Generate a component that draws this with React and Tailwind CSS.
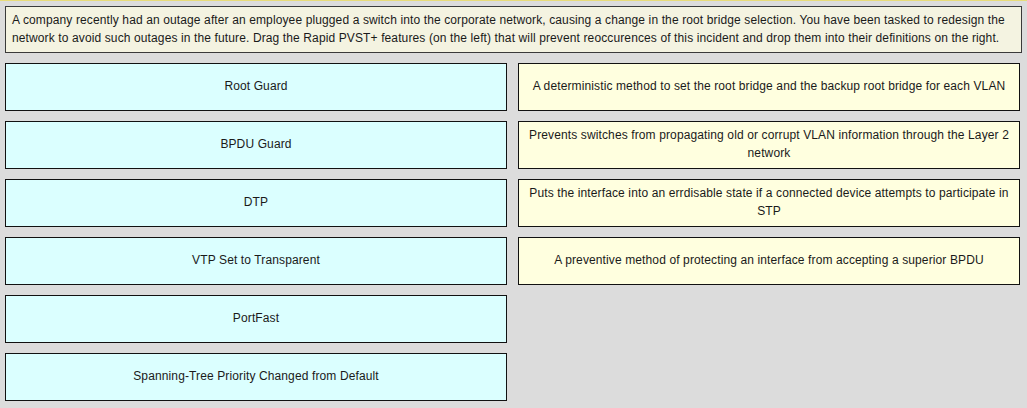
import React from "react";

const features = [
  "Root Guard",
  "BPDU Guard",
  "DTP",
  "VTP Set to Transparent",
  "PortFast",
  "Spanning-Tree Priority Changed from Default",
];

const definitions = [
  "A deterministic method to set the root bridge and the backup root bridge for each VLAN",
  "Prevents switches from propagating old or corrupt VLAN information through the Layer 2 network",
  "Puts the interface into an errdisable state if a connected device attempts to participate in STP",
  "A preventive method of protecting an interface from accepting a superior BPDU",
];

const DragDrop = () => {
  return (
    <div className="w-[1027px] h-[408px] bg-[#dcdcdc] border-t border-[#e8dc7a] text-[#1a1a1a] font-['Liberation_Sans',Arial,sans-serif] text-[12px] leading-[18px] tracking-[0.12px]">
      {/* Question */}
      <div className="pt-[5px] px-[5px]">
        <div className="h-[47px] bg-[#f4f3e1] border border-[#3a3a3a] px-[6px] pt-[4px]">
          A company recently had an outage after an employee plugged a switch into the corporate network, causing a change in the root bridge selection. You have been tasked to redesign the network to avoid such outages in the future. Drag the Rapid PVST+ features (on the left) that will prevent reoccurences of this incident and drop them into their definitions on the right.
        </div>
      </div>

      {/* Drag & drop columns */}
      <div className="flex gap-[11px] pl-[5px] pt-[10px]">
        <div className="flex flex-col gap-[10px] w-[502px]">
          {features.map((f, i) => (
            <div
              key={i}
              className="h-[48px] pb-[2px] bg-[#dbffff] border-[1.5px] border-[#111] flex items-center justify-center text-center"
            >
              {f}
            </div>
          ))}
        </div>
        <div className="flex flex-col gap-[10px] w-[502px]">
          {definitions.map((d, i) => (
            <div
              key={i}
              className="h-[48px] pb-[2px] bg-[#ffffdf] border-[1.5px] border-[#111] flex items-center justify-center text-center px-[8px]"
            >
              {d}
            </div>
          ))}
        </div>
      </div>
    </div>
  );
};

export default DragDrop;
